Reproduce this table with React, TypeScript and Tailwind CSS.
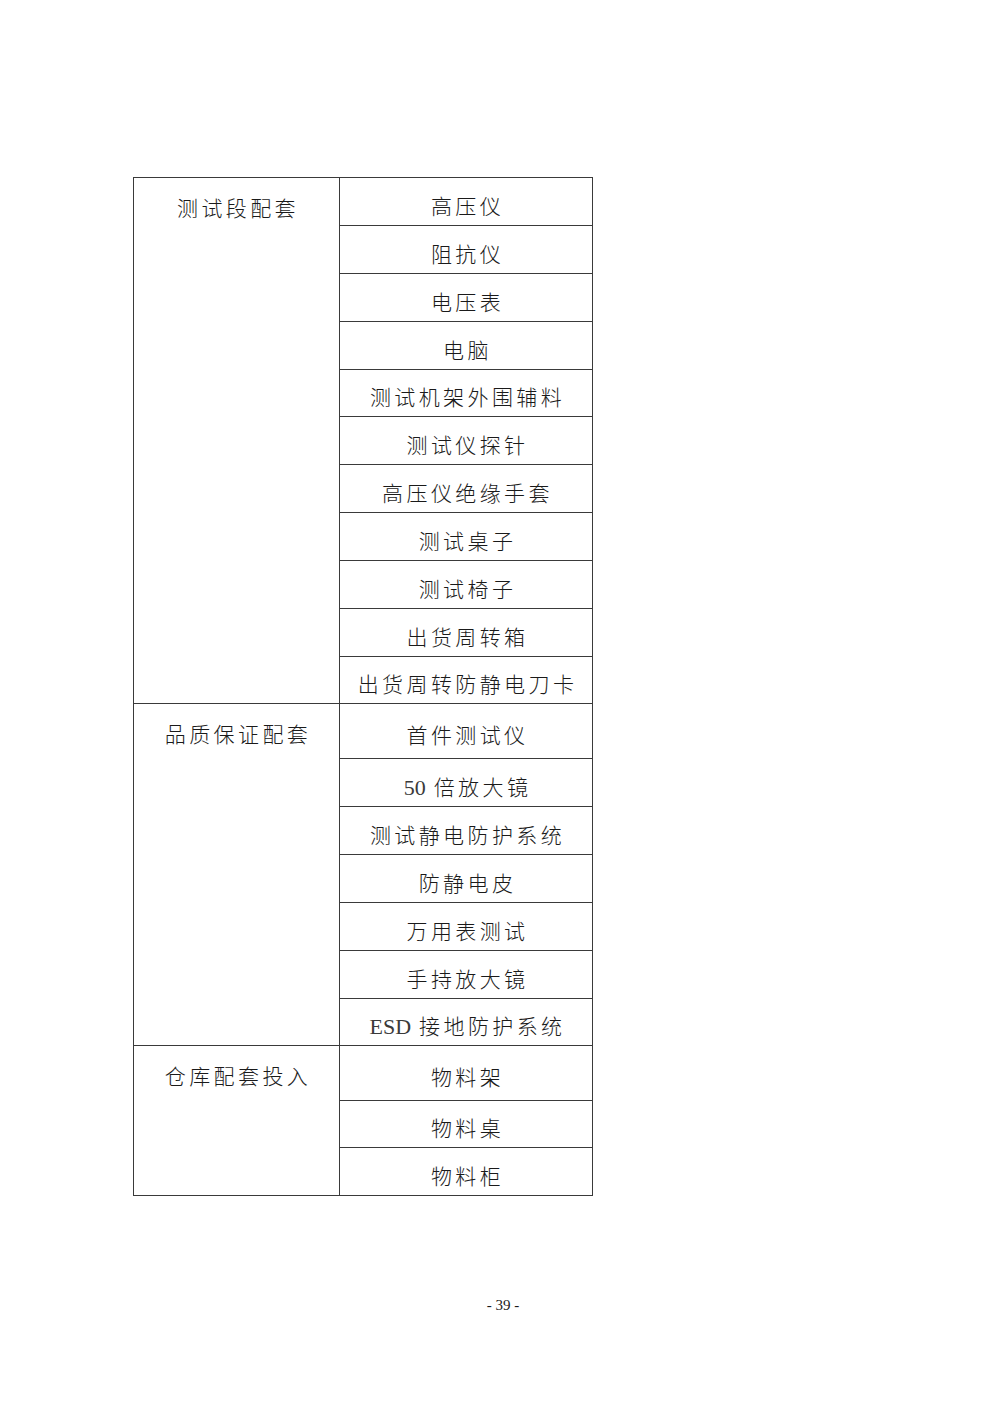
const sections = [
  {
    label: "测试段配套",
    rows: [
      { text: "高压仪", h: 47 },
      { text: "阻抗仪", h: 48 },
      { text: "电压表", h: 48 },
      { text: "电脑", h: 48 },
      { text: "测试机架外围辅料", h: 47 },
      { text: "测试仪探针", h: 48 },
      { text: "高压仪绝缘手套", h: 48 },
      { text: "测试桌子", h: 48 },
      { text: "测试椅子", h: 48 },
      { text: "出货周转箱", h: 48 },
      { text: "出货周转防静电刀卡", h: 47 },
    ],
  },
  {
    label: "品质保证配套",
    rows: [
      { text: "首件测试仪", h: 54 },
      { latin: "50", text: "倍放大镜", h: 48 },
      { text: "测试静电防护系统", h: 48 },
      { text: "防静电皮", h: 48 },
      { text: "万用表测试", h: 48 },
      { text: "手持放大镜", h: 48 },
      { latin: "ESD", text: "接地防护系统", h: 47 },
    ],
  },
  {
    label: "仓库配套投入",
    rows: [
      { text: "物料架", h: 54 },
      { text: "物料桌", h: 47 },
      { text: "物料柜", h: 48 },
    ],
  },
];

export default function App() {
  return (
    <div
      className="w-[1000px] h-[1414px] bg-white text-[#1a1a1a] relative"
      style={{ fontFamily: '"Liberation Serif", "Noto Sans CJK SC", serif' }}
    >
      <div className="pt-[177px] pl-[133px]">
        <div className="w-[460px] border border-[#3a3a3a]">
          {sections.map((s, si) => (
            <div key={si} className={"flex " + (si > 0 ? "border-t border-[#3a3a3a]" : "")}>
              <div className="w-[206px] shrink-0 border-r border-[#3a3a3a] flex justify-center pt-[19px]">
                <span className="text-[21px] leading-[24px] tracking-[3.4px] pl-[3px] font-light">{s.label}</span>
              </div>
              <div className="flex-1 flex flex-col">
                {s.rows.map((r, ri) => (
                  <div
                    key={ri}
                    className={"flex items-center justify-center pt-[10px] " + (ri > 0 ? "border-t border-[#3a3a3a]" : "")}
                    style={{ height: r.h }}
                  >
                    <span className="text-[21px] leading-[24px] whitespace-nowrap pl-[3px]">
                      {r.latin && (
                        <span className="tracking-normal mr-[8px] text-[22px] font-normal text-[#3a3a3a]">{r.latin}</span>
                      )}
                      <span className="tracking-[3.4px] font-light">{r.text}</span>
                    </span>
                  </div>
                ))}
              </div>
            </div>
          ))}
        </div>
      </div>
      <div className="absolute top-[1296px] left-0 w-full text-center text-[15px] leading-[18px] pl-[6px]">- 39 -</div>
    </div>
  );
}
